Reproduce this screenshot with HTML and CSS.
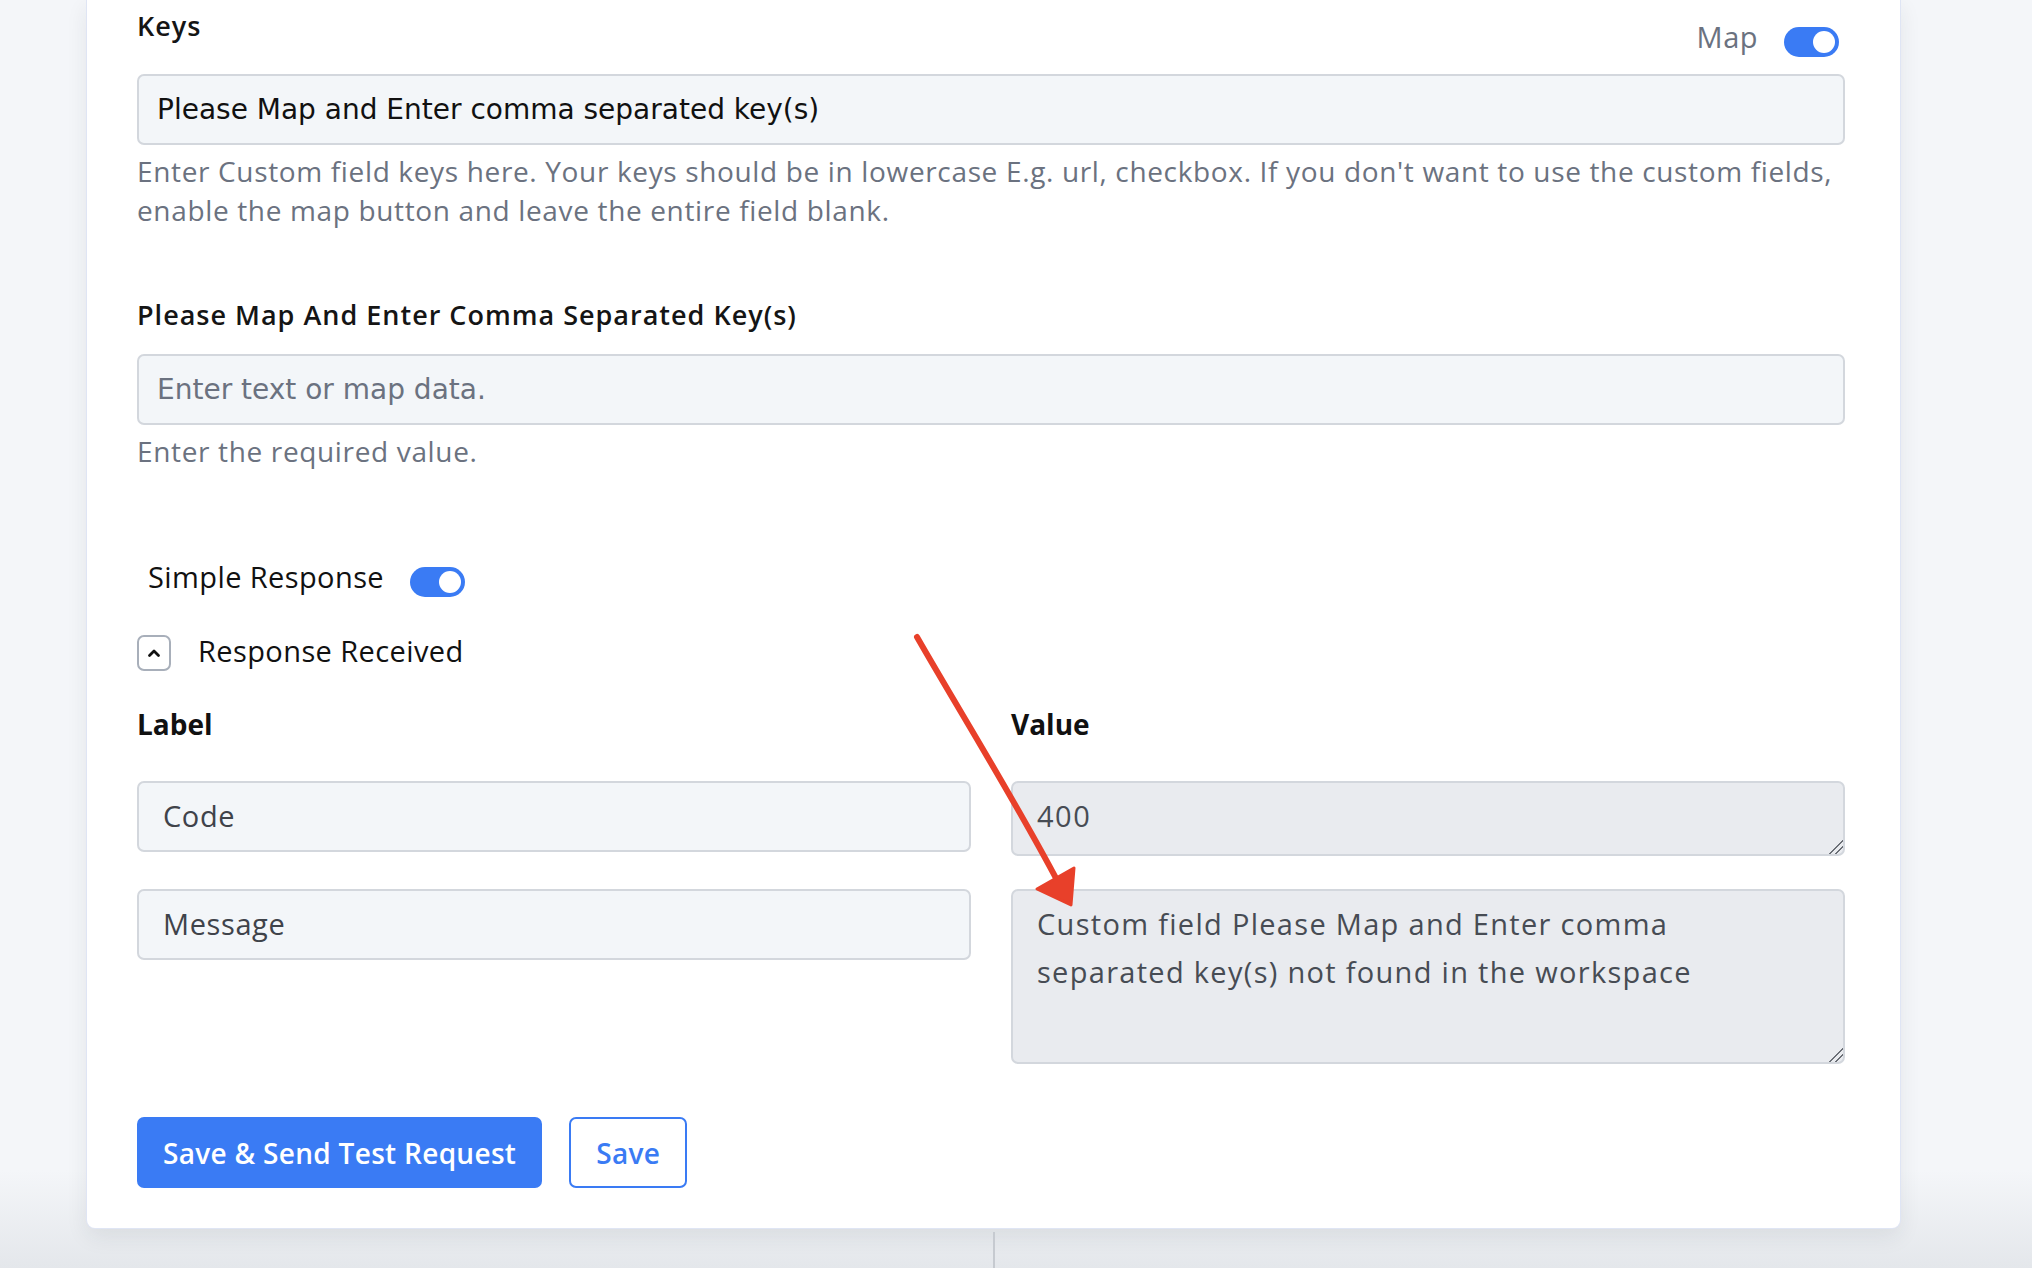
FILE: index.html
```html
<!DOCTYPE html>
<html lang="en">
<head>
  <meta charset="UTF-8" />
  <meta name="viewport" content="width=device-width, initial-scale=1.0" />
  <title>Custom Field Step</title>
  <link rel="stylesheet" href="styles.css">
</head>
<body>

  <div class="page">
    <div class="card">

      <div class="field">
        <div class="field-head">
          <label class="field-label">Keys</label>
          <div class="map-switch">
            <span class="map-text">Map</span>
            <span class="toggle on"></span>
          </div>
        </div>
        <input class="text-input" type="text" value="Please Map and Enter comma separated key(s)">
        <p class="help">Enter Custom field keys here. Your keys should be in lowercase E.g. url, checkbox. If you don't want to use the custom fields, enable the map button and leave the entire field blank.</p>
      </div>

      <div class="field second">
        <label class="field-label spaced">Please Map And Enter Comma Separated Key(s)</label>
        <input class="text-input" type="text" placeholder="Enter text or map data.">
        <p class="help">Enter the required value.</p>
      </div>

      <div class="switch-row">
        <span>Simple Response</span>
        <span class="toggle on"></span>
      </div>

      <div class="collapse-row">
        <button class="chevron" type="button">
          <svg width="14" height="10" viewBox="0 0 14 10"><path d="M2.5 7.5 L7 3 L11.5 7.5" fill="none" stroke="#111" stroke-width="2.8" stroke-linecap="round" stroke-linejoin="round"/></svg>
        </button>
        <span class="collapse-title">Response Received</span>
      </div>

      <div class="response-grid">
        <div class="col-title">Label</div>
        <div class="col-title">Value</div>

        <input class="cell-input" type="text" value="Code" readonly>
        <textarea class="cell-value short" readonly>400</textarea>

        <input class="cell-input" type="text" value="Message" readonly>
        <textarea class="cell-value tall" readonly>Custom field Please Map and Enter comma separated key(s) not found in the workspace</textarea>
      </div>

      <div class="actions">
        <button class="btn primary" type="button">Save &amp; Send Test Request</button>
        <button class="btn outline" type="button">Save</button>
      </div>
    </div>

    <div class="connector"></div>

    <!-- red marker arrow drawn over the form -->
    <svg class="marker" width="200" height="300" viewBox="900 620 200 300">
      <path d="M917 637 C960 712 1012 795 1058 882" fill="none" stroke="#e8402a" stroke-width="6" stroke-linecap="round"/>
      <polygon points="1037,889 1074,868 1071,905" fill="#e8402a" stroke="#e8402a" stroke-width="3" stroke-linejoin="round"/>
    </svg>
  </div>

</body>
</html>
```

FILE: styles.css
```css
* { margin: 0; padding: 0; box-sizing: border-box; }
html, body { height: 100%; }
body {
  font-family: "Open Sans", "Noto Sans", sans-serif;
  color: #111;
  background: linear-gradient(#f4f6f9 0, #f4f6f9 1170px, #e4e7eb 1268px);
  overflow: hidden;
}

.page { position: relative; min-height: 100%; }

.card {
  margin-left: 87px;
  width: 1813px;
  background: #fff;
  padding: 8px 55px 40px 50px;
  border-radius: 0 0 8px 8px;
  box-shadow: 0 0 0 1px #dfe5f4, 0 8px 22px rgba(30, 40, 60, 0.09);
}

/* form fields */
.field-head {
  display: flex;
  justify-content: space-between;
  align-items: flex-start;
  margin-bottom: 17px;
}

.field-label {
  display: block;
  font-size: 27px;
  line-height: 36px;
  font-weight: 600;
  letter-spacing: 1px;
  color: #151515;
}
.field-label.spaced { margin-bottom: 21px; }

.field.second { margin-top: 67px; }

.map-switch {
  display: flex;
  align-items: center;
  gap: 26px;
  margin-top: 19px;
  margin-right: 6px;
  color: #6b7280;
  font-size: 29px;
  letter-spacing: 0.5px;
}
.map-text { margin-top: -12px; }

.toggle {
  display: inline-block;
  position: relative;
  width: 55px;
  height: 30px;
  border-radius: 15px;
  background: #d1d5db;
}
.toggle.on { background: #3a7bf4; }
.toggle::after {
  content: "";
  position: absolute;
  top: 4px;
  left: 4px;
  width: 22px;
  height: 22px;
  border-radius: 50%;
  background: #fff;
}
.toggle.on::after { left: 29px; }

.text-input {
  display: block;
  width: 100%;
  height: 71px;
  padding: 0 18px;
  border: 2px solid #d3d7dd;
  border-radius: 7px;
  background: #f3f6f9;
  font-family: "DejaVu Sans", Verdana, sans-serif;
  font-size: 28px;
  color: #111;
  outline: none;
}
.text-input::placeholder { color: #6b7280; }

.help {
  margin-top: 7px;
  font-size: 28px;
  line-height: 39px;
  letter-spacing: 0.65px;
  color: #6b7280;
}

/* response section */
.switch-row {
  display: flex;
  align-items: flex-start;
  gap: 26px;
  margin-top: 86px;
  padding-left: 11px;
  font-size: 29px;
  line-height: 40px;
  letter-spacing: 0.4px;
}
.switch-row .toggle { margin-top: 10px; }

.collapse-row {
  display: flex;
  align-items: center;
  gap: 27px;
  margin-top: 38px;
  font-size: 29px;
  letter-spacing: 0.4px;
}
.collapse-title { margin-top: -6px; }

.chevron {
  width: 34px;
  height: 36px;
  border: 2px solid #a8afba;
  border-radius: 7px;
  background: #fff;
  display: flex;
  align-items: center;
  justify-content: center;
}

.response-grid {
  display: grid;
  grid-template-columns: 1fr 1fr;
  column-gap: 40px;
  row-gap: 33px;
  margin-top: 33px;
  align-items: start;
}

.col-title {
  font-size: 28px;
  line-height: 40px;
  font-weight: 700;
  margin-bottom: 4px;
}

.cell-input {
  width: 100%;
  height: 71px;
  padding: 0 24px 3px;
  border: 2px solid #d3d7dd;
  border-radius: 7px;
  background: #f3f6f9;
  font-family: "Open Sans", sans-serif;
  font-size: 29px;
  letter-spacing: 0.6px;
  color: #3f434a;
  outline: none;
}

.cell-value {
  display: block;
  width: 100%;
  padding: 9px 90px 9px 24px;
  border: 2px solid #d3d7dd;
  border-radius: 7px;
  background: #e9ebef;
  font-family: "Open Sans", sans-serif;
  font-size: 29px;
  line-height: 48px;
  letter-spacing: 1.3px;
  color: #474c54;
  outline: none;
  overflow: hidden;
}
.cell-value.short { height: 75px; letter-spacing: 1.5px; }
.cell-value.tall { height: 175px; }
.cell-value::-webkit-resizer {
  background: linear-gradient(135deg, transparent 52%, #6b6f76 52%, #6b6f76 58%, transparent 58%, transparent 72%, #6b6f76 72%, #6b6f76 78%, transparent 78%);
}

/* buttons */
.actions {
  display: flex;
  gap: 27px;
  margin-top: 53px;
}

.btn {
  height: 71px;
  border-radius: 7px;
  font-family: "Open Sans", sans-serif;
  font-size: 28px;
  font-weight: 600;
  letter-spacing: 0.3px;
  cursor: pointer;
}
.btn.primary {
  padding: 0 26px;
  background: #3a7bf4;
  border: none;
  color: #fff;
}
.btn.outline {
  padding: 0 25px;
  background: #fff;
  border: 2px solid #3a7bf4;
  color: #3a7bf4;
}

.connector {
  width: 2px;
  height: 60px;
  margin-left: 993px;
  margin-top: 4px;
  background: #c6cad0;
}

.marker {
  position: absolute;
  left: 900px;
  top: 620px;
  pointer-events: none;
}
```
